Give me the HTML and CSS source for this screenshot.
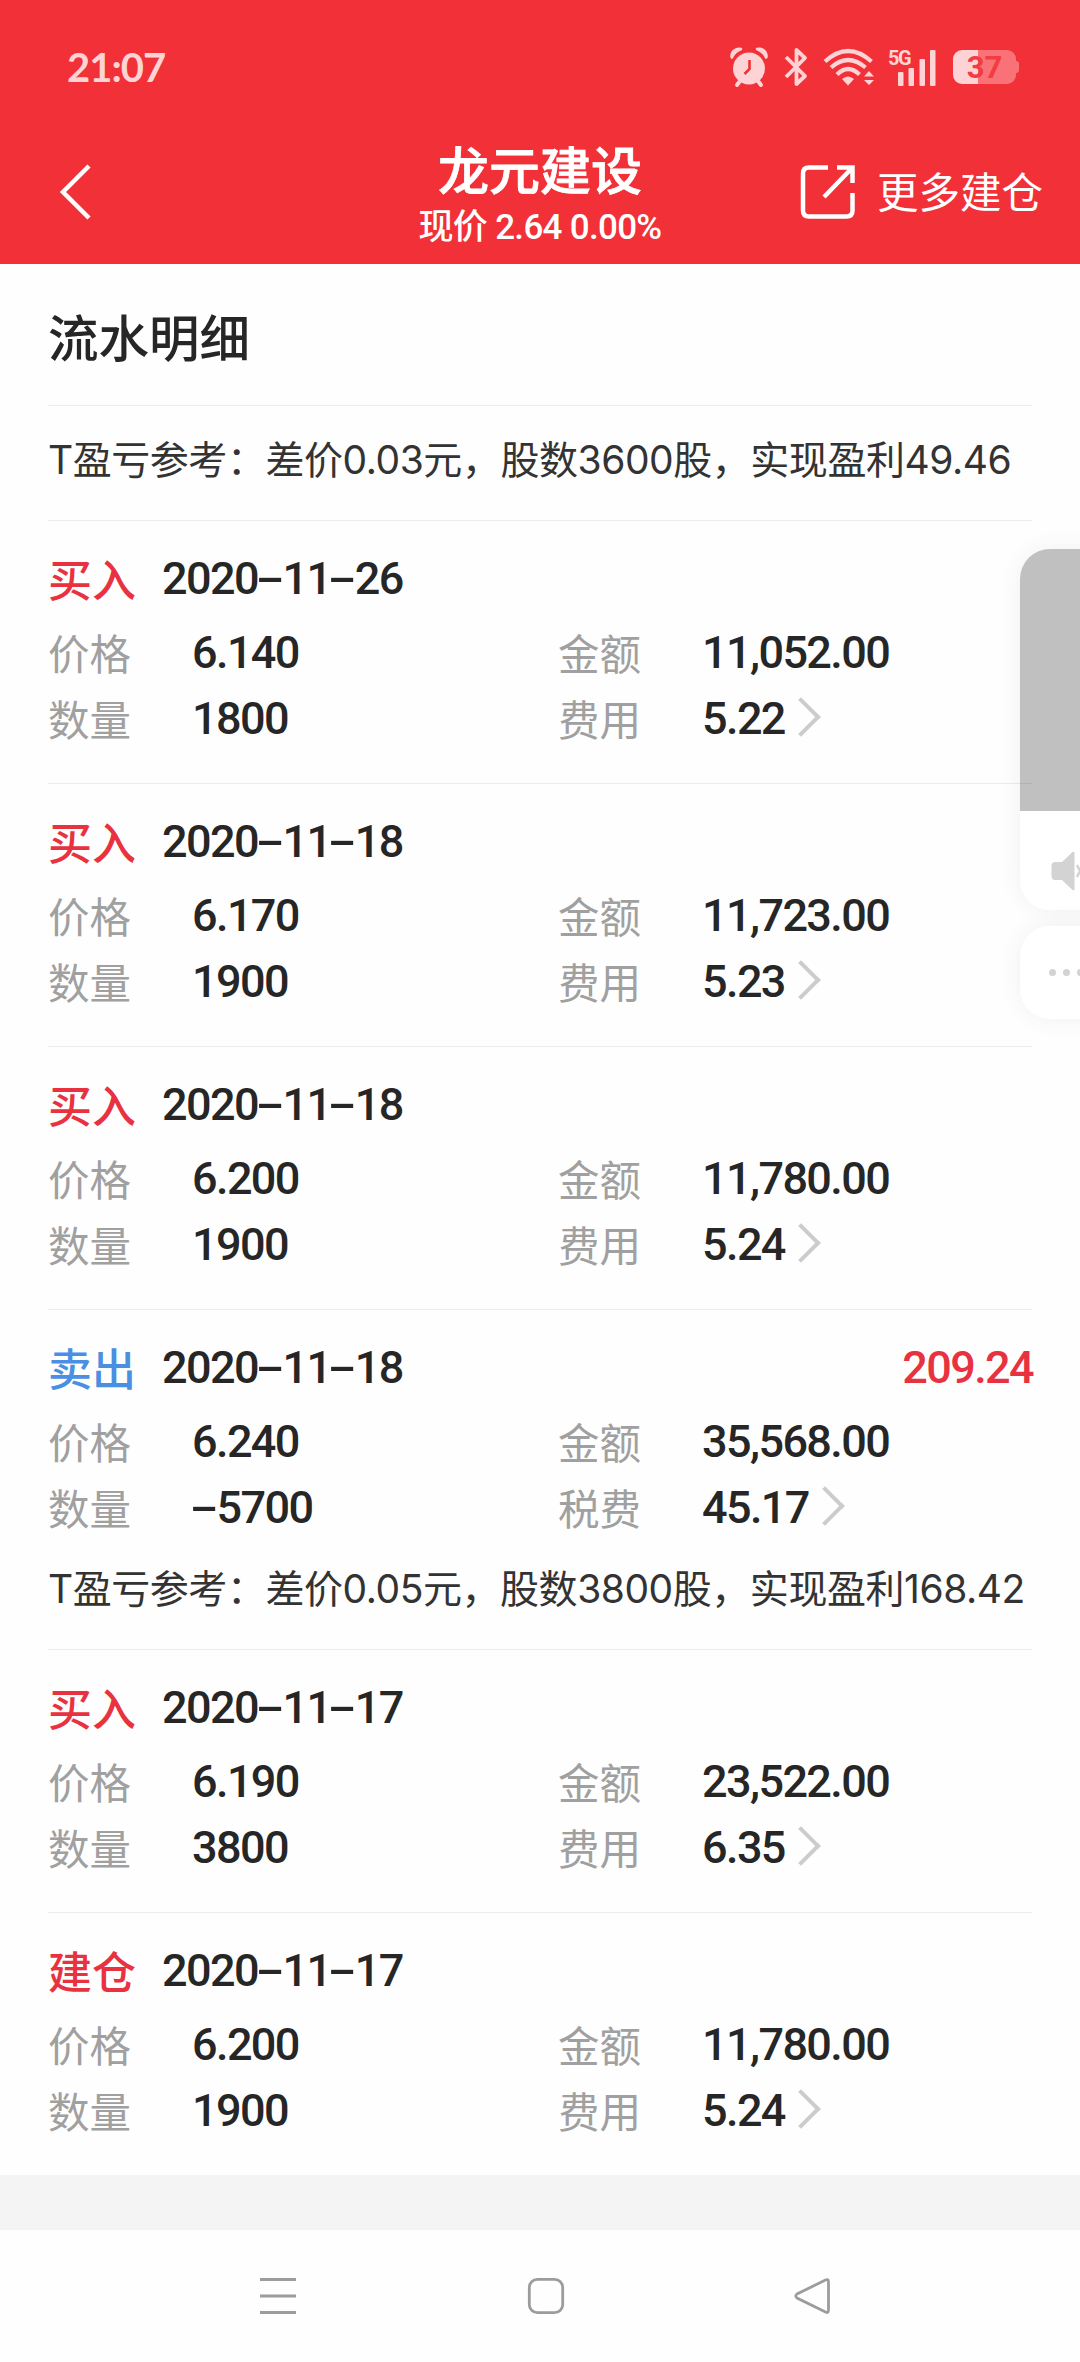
FILE: index.html
```html
<!DOCTYPE html>
<html lang="zh-CN">
<head>
    <meta charset="UTF-8">
    <meta name="viewport" content="width=device-width, initial-scale=1.0">
    <title>龙元建设 - 流水明细</title>
    <link rel="stylesheet" href="styles.css">
</head>
<body>
    <header class="header">
        <div class="status-bar">
            <span class="time">21:07</span>
            <div class="status-icons">
                <svg class="icon-alarm" width="38" height="40" viewBox="0 0 38 40">
                    <path d="M1.500 10C1 4 6 1 11 2Q4 5 2 10.500ZM36.500 10C37 4 32 1 27 2Q34 5 36 10.500Z" stroke="#fdd3d5" stroke-width="2.500" stroke-linejoin="round"/>
                    <circle cx="19" cy="21.500" r="16"/>
                    <path d="M10 34L7 38M28 34L31 38" stroke="#fdd3d5" stroke-width="4" stroke-linecap="round"/>
                    <path d="M19.500 13V22L14.500 27" stroke="#f23037" stroke-width="2.600" fill="none"/>
                </svg>
                <svg class="icon-bluetooth" width="24" height="40" viewBox="0 0 24 40">
                    <path d="M2 10L21 29L12.500 37V3L21 11L2 30" fill="none" stroke="#fdd3d5" stroke-width="3.800" stroke-linejoin="round"/>
                </svg>
                <svg class="icon-wifi" width="52" height="40" viewBox="0 0 52 40">
                    <g fill="none" stroke="#fdd3d5" stroke-width="4.200">
                        <path d="M2 14.500Q25 -6.500 48.500 14.500"/>
                        <path d="M8 20.500Q25 5.500 42.500 20.500"/>
                        <path d="M14 27.500Q25 16.500 36.500 27.500"/>
                    </g>
                    <path d="M19 32Q25 27 31 32L25 38.500Z"/>
                    <path d="M41 29.500L46 24L51 29.500ZM41 33L46 38L51 33Z"/>
                </svg>
                <svg class="icon-signal" width="50" height="40" viewBox="0 0 50 40">
                    <text class="network" x="0" y="18">5G</text>
                    <rect x="10" y="25" width="5.500" height="14" rx="1"/>
                    <rect x="20.500" y="21" width="5.500" height="18" rx="1"/>
                    <rect x="31.500" y="12" width="5.500" height="27" rx="1"/>
                    <rect x="42" y="3" width="5.500" height="36" rx="1"/>
                </svg>
                <div class="battery">37</div>
            </div>
        </div>
        <nav class="title-bar">
            <svg class="back" width="34" height="56" viewBox="0 0 34 56">
                <path d="M31 2L5 28L31 54" fill="none" stroke="#fff" stroke-width="4.500"/>
            </svg>
            <div class="stock">
                <h1>龙元建设</h1>
                <p>现价 2.64 0.00%</p>
            </div>
            <a class="more">
                <svg width="56" height="56" viewBox="0 0 56 56">
                    <path d="M28 3.500H9Q3 3.500 3 9.500V46.500Q3 52.500 9 52.500H46.500Q52.500 52.500 52.500 46.500V29M37 3.500H52.500V19M52.500 3.500L24 33" fill="none" stroke="#fff" stroke-width="4.500"/>
                </svg>
                <span>更多建仓</span>
            </a>
        </nav>
    </header>

    <main class="content">
        <h2>流水明细</h2>
        <p class="note top-note">T盈亏参考：差价0.03元，股数3600股，实现盈利49.46</p>

        <section class="record">
            <div class="record-head"><b class="buy">买入</b><span class="num">2020<i>-</i>11<i>-</i>26</span></div>
            <dl>
                <dt>价格</dt><dd>6.140</dd><dt>金额</dt><dd>11,052.00</dd>
                <dt>数量</dt><dd>1800</dd><dt>费用</dt><dd class="fee">5.22</dd>
            </dl>
        </section>

        <section class="record">
            <div class="record-head"><b class="buy">买入</b><span class="num">2020<i>-</i>11<i>-</i>18</span></div>
            <dl>
                <dt>价格</dt><dd>6.170</dd><dt>金额</dt><dd>11,723.00</dd>
                <dt>数量</dt><dd>1900</dd><dt>费用</dt><dd class="fee">5.23</dd>
            </dl>
        </section>

        <section class="record">
            <div class="record-head"><b class="buy">买入</b><span class="num">2020<i>-</i>11<i>-</i>18</span></div>
            <dl>
                <dt>价格</dt><dd>6.200</dd><dt>金额</dt><dd>11,780.00</dd>
                <dt>数量</dt><dd>1900</dd><dt>费用</dt><dd class="fee">5.24</dd>
            </dl>
        </section>

        <section class="record with-note">
            <div class="record-head"><b class="sell">卖出</b><span class="num">2020<i>-</i>11<i>-</i>18</span><span class="num profit">209.24</span></div>
            <dl>
                <dt>价格</dt><dd>6.240</dd><dt>金额</dt><dd>35,568.00</dd>
                <dt>数量</dt><dd><i>-</i>5700</dd><dt>税费</dt><dd class="fee">45.17</dd>
            </dl>
            <p class="note">T盈亏参考：差价0.05元，股数3800股，实现盈利168.42</p>
        </section>

        <section class="record">
            <div class="record-head"><b class="buy">买入</b><span class="num">2020<i>-</i>11<i>-</i>17</span></div>
            <dl>
                <dt>价格</dt><dd>6.190</dd><dt>金额</dt><dd>23,522.00</dd>
                <dt>数量</dt><dd>3800</dd><dt>费用</dt><dd class="fee">6.35</dd>
            </dl>
        </section>

        <section class="record">
            <div class="record-head"><b class="buy">建仓</b><span class="num">2020<i>-</i>11<i>-</i>17</span></div>
            <dl>
                <dt>价格</dt><dd>6.200</dd><dt>金额</dt><dd>11,780.00</dd>
                <dt>数量</dt><dd>1900</dd><dt>费用</dt><dd class="fee">5.24</dd>
            </dl>
        </section>
    </main>

    <footer class="system-nav">
        <svg width="40" height="40" viewBox="0 0 40 40">
            <path d="M2 3.500H38M2 20H38M2 36.500H38"/>
        </svg>
        <svg width="40" height="40" viewBox="0 0 40 40">
            <rect x="3.300" y="3.300" width="33.400" height="33.400" rx="8"/>
        </svg>
        <svg width="40" height="40" viewBox="0 0 40 40">
            <path d="M32.500 4L4 18Q1.500 20 4 22L32.500 36Q35.500 37.500 35.500 34V6Q35.500 2.500 32.500 4Z"/>
        </svg>
    </footer>

    <!-- floating window docked at the right edge -->
    <aside class="floating">
        <div class="float-card">
            <div class="float-video"></div>
            <div class="float-sound">
                <svg width="29" height="40" viewBox="0 0 29 40">
                    <path d="M4 11H11L21.500 1Q23.500 0 23.500 2V38Q23.500 40 21.500 39L11 29H4Q0.500 29 0.500 25V15Q0.500 11 4 11Z"/>
                    <path d="M26 14L32 26M32 14L26 26" stroke="#d3d3d3" stroke-width="2.500"/>
                </svg>
            </div>
        </div>
        <div class="float-more"><span></span><span></span><span></span></div>
    </aside>
</body>
</html>
```
FILE: styles.css
```css
* {
    box-sizing: border-box;
}
body {
    margin: 0;
    width: 1080px;
    height: 2362px;
    display: flex;
    flex-direction: column;
    position: relative;
    overflow: hidden;
    font-family: Roboto, "Noto Sans CJK SC", sans-serif;
    color: #262626;
    background-color: #f4f4f4;
}
h1, h2, p, dl, dd {
    margin: 0;
}
svg {
    display: block;
    flex: none;
}

/* header */
.header {
    height: 264px;
    background-color: #f23037;
    color: #fff;
}
.status-bar {
    height: 134px;
    padding: 0 61px 0 67px;
    display: flex;
    align-items: center;
    justify-content: space-between;
}
.time {
    font-family: Lato, sans-serif;
    font-weight: bold;
    font-size: 40px;
    letter-spacing: -1px;
    color: #fdd3d5;
}
.status-icons {
    display: flex;
    align-items: center;
}
.status-icons svg {
    fill: #fdd3d5;
    overflow: visible;
}
.icon-alarm {
    margin-right: 16px;
}
.icon-bluetooth {
    margin-right: 15px;
}
.icon-wifi {
    margin-right: 13px;
}
.icon-signal {
    margin-right: 15px;
}
.network {
    font-size: 20px;
    font-weight: bold;
    letter-spacing: -1.5px;
}
.battery {
    position: relative;
    width: 63px;
    height: 34px;
    margin-right: 3px;
    border-radius: 9px;
    background: linear-gradient(to right, #fdd3d5 25px, #f97277 25px);
    color: #f23b42;
    font-size: 31px;
    font-weight: bold;
    line-height: 35px;
    text-align: center;
}
.battery::after {
    content: "";
    position: absolute;
    right: -3px;
    top: 11px;
    width: 3px;
    height: 12px;
    border-radius: 0 3px 3px 0;
    background-color: #f97277;
}
.title-bar {
    height: 130px;
    padding: 0 37px;
    display: grid;
    grid-template-columns: 1fr auto 1fr;
}
.back {
    margin: 30px 0 0 21px;
}
.stock {
    text-align: center;
}
.stock h1 {
    margin-top: 11px;
    font-size: 51px;
    font-weight: 500;
    line-height: 56px;
    -webkit-text-stroke: 0.8px #fff;
}
.stock p {
    margin-top: 5px;
    font-size: 35px;
    font-weight: 500;
    line-height: 44px;
    letter-spacing: -0.7px;
}
.more {
    justify-self: end;
    display: flex;
    gap: 21px;
    margin-top: 30px;
    font-size: 41.5px;
    line-height: 60px;
}

/* record list */
.content {
    height: 1911px;
    padding: 0 48px;
    background-color: #fefefe;
}
.content h2 {
    height: 141px;
    font-size: 50.5px;
    font-weight: 500;
    line-height: 151px;
}
.note {
    font-family: Inter, "Noto Sans CJK SC", sans-serif;
    font-size: 39px;
    line-height: 60px;
    letter-spacing: -0.45px;
    color: #333;
    white-space: nowrap;
}
.top-note {
    height: 115px;
    padding-top: 24px;
    border-top: 1px solid #ebebeb;
}
.record {
    height: 263px;
    padding-top: 31px;
    border-top: 1px solid #ebebeb;
}
.with-note {
    height: 340px;
}
.record-head {
    display: flex;
    height: 64px;
    line-height: 54px;
}
.record-head b {
    width: 114px;
    font-size: 44px;
    font-weight: 500;
    line-height: 60px;
}
.buy, .profit {
    color: #e93240;
}
.sell {
    color: #4a8fe2;
}
.num, dd {
    font-size: 45px;
    font-weight: 500;
    letter-spacing: -1.6px;
}
.profit {
    margin-left: auto;
    margin-right: -1px;
}
/* wide dash, as in DIN numerals */
i {
    display: inline-block;
    width: 24.5px;
    font-style: normal;
    letter-spacing: 0;
    text-align: center;
    transform: translateY(-1px) scale(1.9, 1);
}
dl {
    display: grid;
    grid-template-columns: 144px 366px 144px 1fr;
    grid-auto-rows: 66px;
}
dt {
    font-size: 41.5px;
    font-weight: 400;
    line-height: 80px;
    color: #a0a0a0;
}
dd {
    line-height: 74px;
}
.fee::after {
    content: "";
    display: inline-block;
    width: 24px;
    height: 24px;
    margin-left: 2px;
    border-top: 4px solid #ccc;
    border-right: 4px solid #ccc;
    transform: translateY(-3px) rotate(45deg);
}
.with-note .note {
    margin-top: 22px;
}

/* android navigation bar */
.system-nav {
    margin-top: auto;
    height: 132px;
    padding: 46px 247px 0 258px;
    display: flex;
    justify-content: space-between;
    background-color: #fefefe;
}
.system-nav svg {
    fill: none;
    stroke: #9c9c9c;
    stroke-width: 2.8;
}

/* floating window */
.floating {
    position: absolute;
    left: 1020px;
    top: 549px;
    width: 60px;
}
.float-card, .float-more {
    width: 100px;
    border-radius: 30px;
    box-shadow: 0 0 24px rgba(0, 0, 0, 0.06);
}
.float-card {
    height: 361px;
    overflow: hidden;
}
.float-video {
    height: 262px;
    background-color: rgba(0, 0, 0, 0.245);
}
.float-sound {
    height: 99px;
    padding: 40px 0 0 31px;
    background-color: #fff;
}
.float-sound svg {
    fill: #d3d3d3;
}
.float-more {
    display: flex;
    align-items: center;
    gap: 7px;
    height: 93px;
    margin-top: 16px;
    padding-left: 29px;
    background-color: #fff;
}
.float-more span {
    width: 7px;
    height: 7px;
    border-radius: 50%;
    background-color: #d3d3d3;
}
```
